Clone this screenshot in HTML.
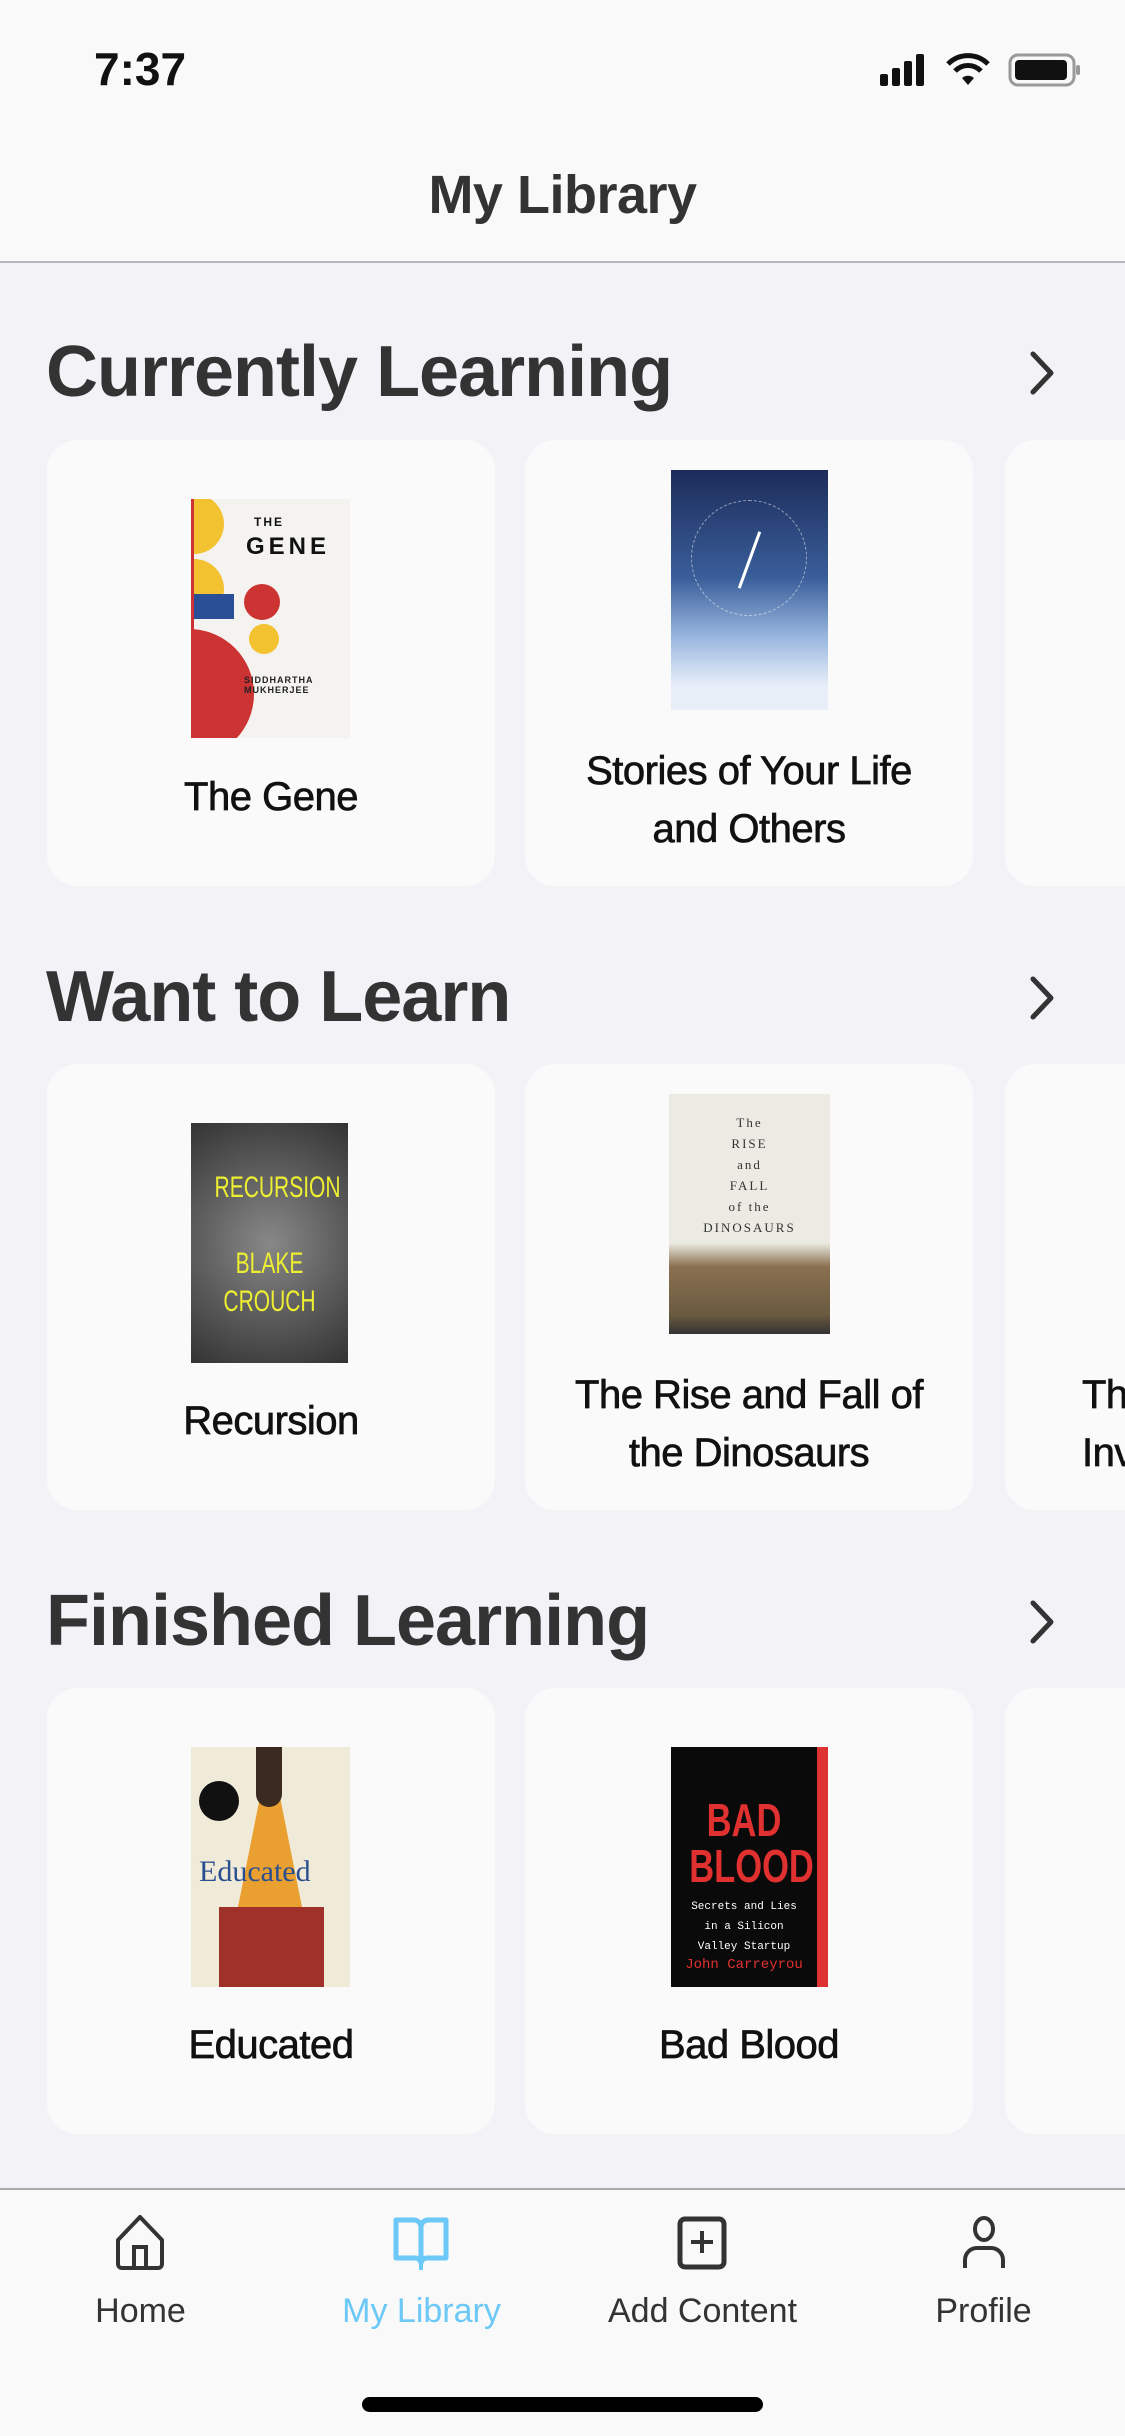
<!DOCTYPE html>
<html><head><meta charset="utf-8">
<style>
*{margin:0;padding:0;box-sizing:border-box}
body{width:1125px;height:2436px;background:#f2f2f7;font-family:"Liberation Sans",sans-serif;position:relative;overflow:hidden;color:#333}
.hdr{position:absolute;left:0;top:0;width:1125px;height:263px;background:#f9f9f9;border-bottom:2px solid #b8b8bc}
.time{position:absolute;left:94px;top:42px;font-size:46px;font-weight:bold;color:#111;-webkit-text-stroke:0}
.title{position:absolute;left:0;width:1125px;top:164px;text-align:center;font-size:54px;font-weight:bold;letter-spacing:-0.5px;color:#333}
.h2{position:absolute;left:46px;font-size:72px;font-weight:bold;letter-spacing:-1px;color:#333}
.chev{position:absolute;left:1028px;width:28px;height:46px}
.card{position:absolute;width:448px;height:446px;background:#fafafa;border-radius:30px;overflow:hidden}
.cover{position:absolute;overflow:hidden}
.ct{position:absolute;left:0;width:448px;text-align:center;font-size:40px;color:#111;letter-spacing:-0.5px;line-height:58px;-webkit-text-stroke:0.7px #111}
.tab{position:absolute;top:2188px;left:0;width:1125px;height:248px;background:#f9f9f9;border-top:2px solid #aaa}
.tl{position:absolute;top:2292px;font-size:34px;width:281px;text-align:center;color:#333}
</style></head><body>
<div class="hdr">
 <div class="time">7:37</div>
 <svg style="position:absolute;left:880px;top:52px" width="200" height="36" viewBox="0 0 200 36">
  <rect x="0" y="22" width="8" height="12" rx="2" fill="#111"/><rect x="12" y="16" width="8" height="18" rx="2" fill="#111"/><rect x="24" y="9" width="8" height="25" rx="2" fill="#111"/><rect x="36" y="2" width="8" height="32" rx="2" fill="#111"/>
  <path d="M68 12a28 28 0 0 1 40 0" stroke="#111" stroke-width="5" fill="none"/><path d="M75 19a18 18 0 0 1 26 0" stroke="#111" stroke-width="5" fill="none"/><path d="M82 26l6 7 6-7a9 9 0 0 0-12 0z" fill="#111"/>
  <rect x="130" y="3" width="64" height="30" rx="8" stroke="#999" stroke-width="3" fill="none"/><rect x="135" y="8" width="52" height="20" rx="4" fill="#111"/><rect x="196" y="13" width="4" height="10" rx="2" fill="#999"/>
 </svg>
 <div class="title">My Library</div>
</div>

<!-- Section 1 -->
<div class="h2" style="top:331px">Currently Learning</div>
<svg class="chev" style="top:350px" viewBox="0 0 28 46"><path d="M5 4l18 19L5 42" stroke="#333" stroke-width="5" fill="none" stroke-linecap="round" stroke-linejoin="round"/></svg>
<div class="card" style="left:47px;top:440px">
 <div class="cover" style="left:144px;top:59px;width:159px;height:239px;background:#f4f3ef;border-left:3px solid #c33">
  <div style="position:absolute;left:-30px;top:-5px;width:60px;height:60px;border-radius:50%;background:#f2c230"></div>
  <div style="position:absolute;left:-30px;top:60px;width:60px;height:60px;border-radius:50%;background:#f2c230"></div>
  <div style="position:absolute;left:-10px;top:95px;width:50px;height:25px;background:#2a4f96"></div>
  <div style="position:absolute;left:50px;top:85px;width:36px;height:36px;border-radius:50%;background:#c33"></div>
  <div style="position:absolute;left:55px;top:125px;width:30px;height:30px;border-radius:50%;background:#f2c230"></div>
  <div style="position:absolute;left:-70px;top:130px;width:130px;height:130px;border-radius:50%;background:#c33"></div>
  <div style="position:absolute;left:60px;top:16px;font-size:12px;font-weight:bold;color:#111;letter-spacing:2px">THE</div>
  <div style="position:absolute;left:52px;top:34px;font-size:24px;font-weight:bold;color:#111;letter-spacing:4px">GENE</div>
  <div style="position:absolute;left:50px;top:176px;font-size:9px;font-weight:bold;color:#222;letter-spacing:1px">SIDDHARTHA<br>MUKHERJEE</div>
 </div>
 <div class="ct" style="top:328px">The Gene</div>
</div>
<div class="card" style="left:525px;top:440px">
 <div class="cover" style="left:146px;top:30px;width:157px;height:240px;background:linear-gradient(#1c2c5a 0%,#3a5e9a 45%,#9ab8e0 70%,#e8eef8 90%)">
  <div style="position:absolute;left:20px;top:30px;width:116px;height:116px;border-radius:50%;border:1px dashed rgba(255,255,255,.5)"></div>
  <div style="position:absolute;left:77px;top:60px;width:3px;height:60px;background:#fff;transform:rotate(20deg)"></div>
 </div>
 <div class="ct" style="top:302px">Stories of Your Life<br>and Others</div>
</div>
<div class="card" style="left:1005px;top:440px"></div>

<!-- Section 2 -->
<div class="h2" style="top:956px">Want to Learn</div>
<svg class="chev" style="top:975px" viewBox="0 0 28 46"><path d="M5 4l18 19L5 42" stroke="#333" stroke-width="5" fill="none" stroke-linecap="round" stroke-linejoin="round"/></svg>
<div class="card" style="left:47px;top:1064px">
 <div class="cover" style="left:144px;top:59px;width:157px;height:240px;background:radial-gradient(circle at 50% 50%,#888,#555 60%,#333);text-align:center">
  <div style="margin-top:48px;font-size:30px;color:#ee3;transform:scaleX(.7)">RECURSION</div>
  <div style="margin-top:40px;font-size:30px;color:#ee3;line-height:38px;transform:scaleX(.7)">BLAKE<br>CROUCH</div>
 </div>
 <div class="ct" style="top:328px">Recursion</div>
</div>
<div class="card" style="left:525px;top:1064px">
 <div class="cover" style="left:144px;top:30px;width:161px;height:240px;background:linear-gradient(#ecebe3 62%,#8a7050 72%,#6a5a40 92%,#333);text-align:center;font-family:'Liberation Serif',serif;color:#333">
  <div style="margin-top:18px;font-size:13px;line-height:21px;letter-spacing:2px">The<br>RISE<br>and<br>FALL<br>of the<br>DINOSAURS</div>
 </div>
 <div class="ct" style="top:302px">The Rise and Fall of<br>the Dinosaurs</div>
</div>
<div class="card" style="left:1005px;top:1064px">
 <div class="ct" style="top:302px;left:77px;width:200px;text-align:left">Th<br>Inv</div>
</div>

<!-- Section 3 -->
<div class="h2" style="top:1580px">Finished Learning</div>
<svg class="chev" style="top:1599px" viewBox="0 0 28 46"><path d="M5 4l18 19L5 42" stroke="#333" stroke-width="5" fill="none" stroke-linecap="round" stroke-linejoin="round"/></svg>
<div class="card" style="left:47px;top:1688px">
 <div class="cover" style="left:144px;top:59px;width:159px;height:240px;background:#f0ead8">
  <div style="position:absolute;left:33px;top:0;width:0;height:0;border-left:46px solid transparent;border-right:46px solid transparent;border-bottom:230px solid #e9a030"></div>
  <div style="position:absolute;left:65px;top:0;width:26px;height:60px;background:#3a2a20;border-radius:0 0 13px 13px"></div>
  <div style="position:absolute;left:28px;top:160px;width:105px;height:80px;background:#a0302a"></div>
  <div style="position:absolute;left:8px;top:34px;width:40px;height:40px;border-radius:50%;background:#111"></div>
  <div style="position:absolute;left:8px;top:108px;font-family:'Liberation Serif',serif;font-size:30px;color:#2a4f8f">Educated</div>
 </div>
 <div class="ct" style="top:328px">Educated</div>
</div>
<div class="card" style="left:525px;top:1688px">
 <div class="cover" style="left:146px;top:59px;width:157px;height:240px;background:#0a0a0a;border-right:11px solid #d33">
  <div style="position:absolute;left:0;width:146px;top:50px;text-align:center;font-size:46px;font-weight:bold;color:#e03030;line-height:46px;transform:scaleX(.75)">BAD<br>BLOOD</div>
  <div style="position:absolute;left:0;width:146px;top:150px;text-align:center;font-family:'Liberation Mono',monospace;font-size:11px;color:#fff;line-height:20px">Secrets and Lies<br>in a Silicon<br>Valley Startup</div>
  <div style="position:absolute;left:0;width:146px;top:210px;text-align:center;font-family:'Liberation Mono',monospace;font-size:14px;color:#e03030">John Carreyrou</div>
 </div>
 <div class="ct" style="top:328px">Bad Blood</div>
</div>
<div class="card" style="left:1005px;top:1688px"></div>

<!-- Tab bar -->
<div class="tab"></div>
<svg style="position:absolute;left:114px;top:2214px" width="52" height="56" viewBox="0 0 52 56"><path d="M4 26L26 3l22 23v24a4 4 0 0 1-4 4H8a4 4 0 0 1-4-4z" stroke="#333" stroke-width="4" fill="none" stroke-linejoin="round"/><path d="M20 54V33h12v21" stroke="#333" stroke-width="4" fill="none"/></svg>
<svg style="position:absolute;left:393px;top:2216px" width="56" height="56" viewBox="0 0 56 56"><path d="M3 4h18a7 7 0 0 1 7 7v36a6 6 0 0 0-6-5H3z M53 4H35a7 7 0 0 0-7 7v36a6 6 0 0 1 6-5h19z" stroke="#6cc8f7" stroke-width="5" fill="none" stroke-linejoin="round"/><path d="M28 47v7" stroke="#6cc8f7" stroke-width="4"/></svg>
<svg style="position:absolute;left:677px;top:2216px" width="50" height="54" viewBox="0 0 50 54"><rect x="3" y="3" width="44" height="48" rx="5" stroke="#333" stroke-width="5" fill="none"/><path d="M25 15v22M14 26h22" stroke="#333" stroke-width="4"/></svg>
<svg style="position:absolute;left:960px;top:2214px" width="48" height="56" viewBox="0 0 48 56"><ellipse cx="24" cy="15" rx="9" ry="11" stroke="#333" stroke-width="4" fill="none"/><path d="M5 54V46a12 12 0 0 1 12-12h14a12 12 0 0 1 12 12v8" stroke="#333" stroke-width="4" fill="none"/></svg>
<div class="tl" style="left:0">Home</div>
<div class="tl" style="left:281px;color:#6cc8f7">My Library</div>
<div class="tl" style="left:562px">Add Content</div>
<div class="tl" style="left:843px">Profile</div>
<div style="position:absolute;left:362px;top:2397px;width:401px;height:15px;border-radius:8px;background:#000"></div>
</body></html>
